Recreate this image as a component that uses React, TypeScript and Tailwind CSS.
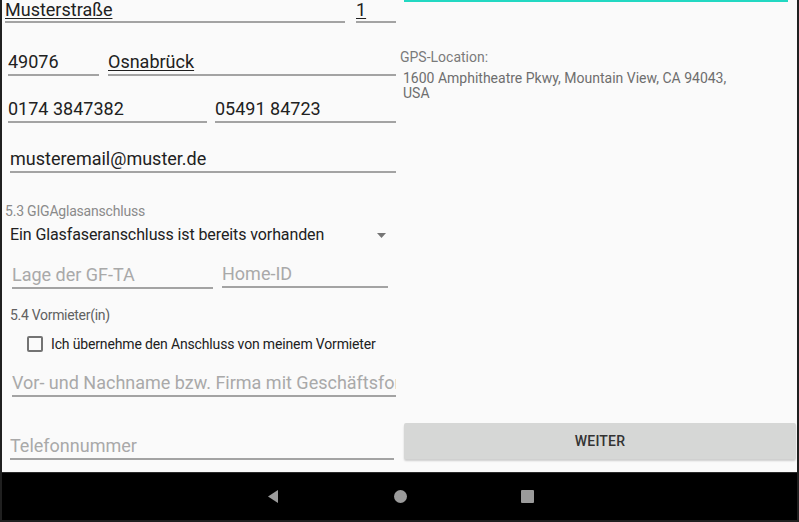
import { clsx } from 'clsx';

const font = { fontFamily: 'Roboto, "Noto Sans", sans-serif' };

type FieldProps = {
  value: string;
  hint?: boolean;
  squiggle?: boolean;
  tight?: boolean;
  className?: string;
};

const Field = ({ value, hint, squiggle, tight, className }: FieldProps) => (
  <div className={clsx('overflow-hidden border-b-2 border-[#a3a3a3] pb-[1px]', className)}>
    <div
      className={clsx(
        'whitespace-nowrap text-[18px]',
        tight ? 'leading-[20px]' : 'leading-[22px]',
        hint ? 'text-[#a9a9a9]' : 'text-[#212121]',
        squiggle && 'underline decoration-1 underline-offset-[2px]',
      )}
    >
      {value}
    </div>
  </div>
);

const LeftColumn = () => (
  <div className="flex w-[397px] flex-col overflow-hidden">
    <div className="ml-[3px] flex gap-[11px]">
      <Field value="Musterstraße" squiggle tight className="w-[340px]" />
      <Field value="1" squiggle tight className="w-[40px]" />
    </div>

    <div className="ml-[6px] mt-[28px] flex gap-[9px]">
      <Field value="49076" className="w-[91px]" />
      <Field value="Osnabrück" squiggle className="w-[288px]" />
    </div>

    <div className="ml-[6px] mt-[22px] flex gap-[8px]">
      <Field value="0174 3847382" className="w-[199px]" />
      <Field value="05491 84723" className="w-[181px]" />
    </div>

    <Field value="musteremail@muster.de" className="ml-[8px] mt-[25px] w-[386px]" />

    <div className="ml-[3px] mt-[30px] text-[14px] leading-[16px] tracking-[-0.2px] text-[#8a8a8a]">
      5.3 GIGAglasanschluss
    </div>
    <div className="ml-[8px] mt-[6px] flex w-[386px] items-center justify-between pr-[10px]">
      <span className="text-[16px] leading-[20px] tracking-[-0.1px] text-[#212121]">
        Ein Glasfaseranschluss ist bereits vorhanden
      </span>
      <svg width="9" height="5" viewBox="0 0 9 5" className="text-[#757575]">
        <path d="M0 0h9L4.5 5z" fill="currentColor" />
      </svg>
    </div>

    <div className="ml-[10px] mt-[19px] flex items-start gap-[9px]">
      <Field value="Lage der GF-TA" hint className="w-[201px]" />
      <Field value="Home-ID" hint className="-mt-px w-[166px]" />
    </div>

    <div className="ml-[8px] mt-[18px] text-[14px] leading-[16px] tracking-[-0.3px] text-[#616161]">
      5.4 Vormieter(in)
    </div>

    <label className="ml-[25px] mt-[13px] flex h-[16px] items-center gap-[8px]">
      <span className="h-[16px] w-[16px] rounded-[2px] border-2 border-[#737373]" />
      <span className="text-[14px] leading-[16px] tracking-[-0.15px] text-[#212121]">
        Ich übernehme den Anschluss von meinem Vormieter
      </span>
    </label>

    <Field
      value="Vor- und Nachname bzw. Firma mit Geschäftsform"
      hint
      className="ml-[10px] mt-[20px] w-[384px]"
    />
    <Field value="Telefonnummer" hint className="ml-[8px] mt-[38px] w-[384px]" />
  </div>
);

const RightColumn = () => (
  <div className="flex flex-1 flex-col">
    <div className="ml-[5px] h-[2px] w-[384px] bg-[#22d8c2]" />
    <div className="ml-[1px] mt-[47px] text-[14px] leading-[16px] text-[#7a7a7a]">
      GPS-Location:
    </div>
    <div className="ml-[4px] mt-[6px] text-[14px] leading-[15px] text-[#6e6e6e]">
      1600 Amphitheatre Pkwy, Mountain View, CA 94043,
      <br />
      USA
    </div>
    <button
      type="button"
      className="mb-[13px] ml-[5px] mr-[1px] mt-auto h-[36px] rounded-[2px] bg-[#d6d7d6] text-[14px] font-medium tracking-[0.2px] text-[#333333] shadow-[0_2px_2px_rgba(0,0,0,0.18)]"
    >
      WEITER
    </button>
  </div>
);

const NavBar = () => (
  <div className="flex h-[48px] items-center border-t border-[#2a2a2a] bg-black pl-[266px]">
    <svg width="10" height="13" viewBox="0 0 10 13" className="text-[#9b9b9b]">
      <path d="M0 6.5L10 0v13z" fill="currentColor" />
    </svg>
    <span className="ml-[116px] h-[13px] w-[13px] rounded-full bg-[#9b9b9b]" />
    <span className="ml-[114px] h-[13px] w-[13px] rounded-[1px] bg-[#9b9b9b]" />
  </div>
);

export default function App() {
  return (
    <div className="flex h-[522px] w-[799px] flex-col bg-[#202020] px-[2px] pb-[1px]" style={font}>
      <div className="flex h-[472px] bg-[#fafafa]">
        <LeftColumn />
        <RightColumn />
      </div>
      <NavBar />
    </div>
  );
}
